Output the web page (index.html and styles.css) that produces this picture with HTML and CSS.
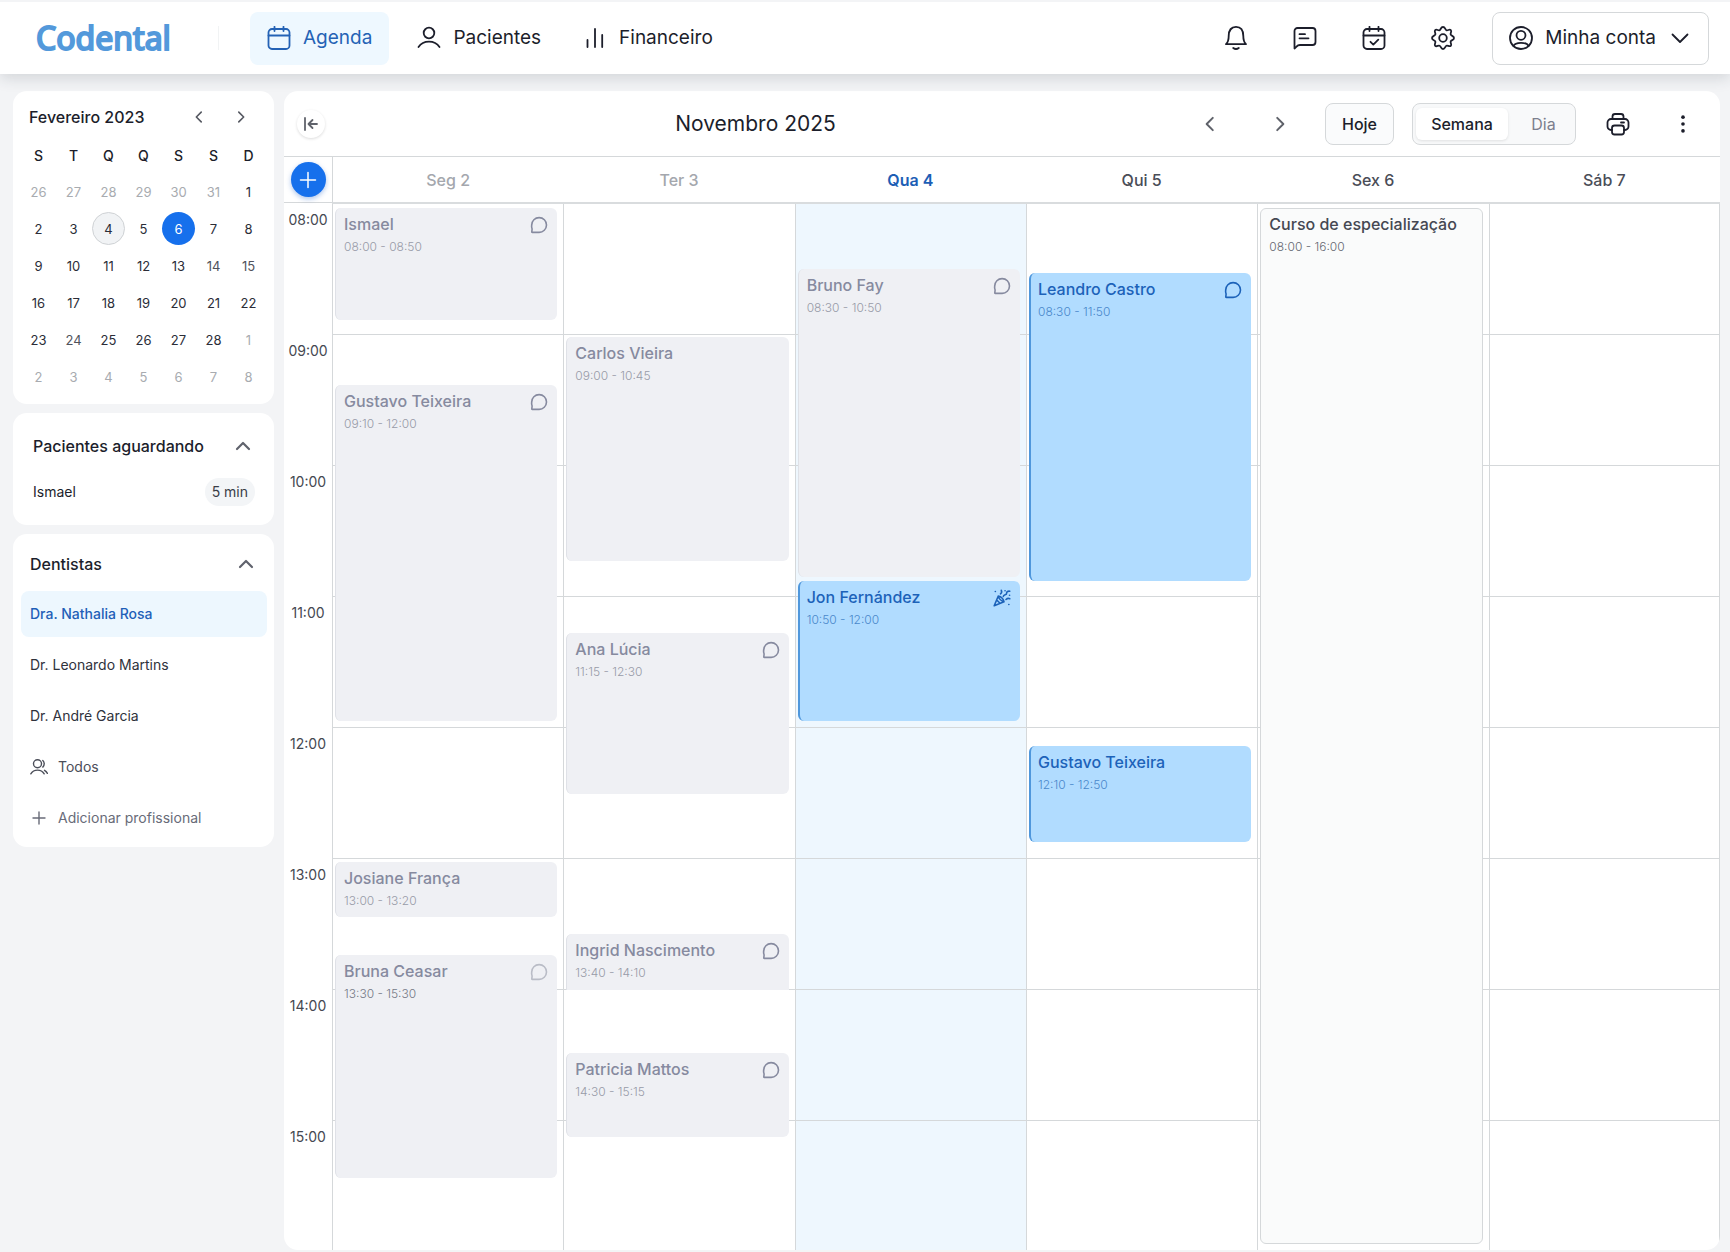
FILE: index.html
```html
<!DOCTYPE html>
<html lang="pt-BR">
<head>
<meta charset="utf-8">
<meta name="viewport" content="width=device-width, initial-scale=1">
<title>Codental – Agenda</title>
<link rel="stylesheet" href="styles.css">
</head>
<body>
<svg class="sprite" aria-hidden="true">
  <symbol id="chat" viewBox="0 0 18 18"><path d="M1.700 9A7.400 7.400 0 1 1 9 16.400H2.300q-.6 0-.5-.6l.3-2.800A7.400 7.400 0 0 1 1.700 9z"/></symbol>
  <symbol id="left" viewBox="0 0 18 18"><path d="M11.5 3.500 6 9l5.500 5.500"/></symbol>
  <symbol id="right" viewBox="0 0 18 18"><path d="M6.500 3.500 12 9l-5.500 5.500"/></symbol>
  <symbol id="up" viewBox="0 0 18 18"><path d="m3 12 6-6 6 6"/></symbol>
</svg>

<header class="topbar">
  <a class="logo" href="#">Codental</a>
  <nav class="nav">
    <a class="nav-link active" href="#" aria-current="page">
      <svg class="icon" viewBox="0 0 24 24"><rect x="1.500" y="3" width="21" height="20" rx="3.500"/><path d="M1.500 9.500h21M7.500.8V5M16.500.8V5"/></svg>
      Agenda</a>
    <a class="nav-link" href="#">
      <svg class="icon" viewBox="0 0 24 24"><circle cx="12" cy="7" r="5.300"/><path d="M1.500 21c2.500-3.700 6.300-5.300 10.500-5.300s8 1.600 10.500 5.300"/></svg>
      Pacientes</a>
    <a class="nav-link finance" href="#">
      <svg class="icon bars" viewBox="0 0 18 24"><path d="M1.500 14v7M9 3v18M16.200 9v12"/></svg>
      Financeiro</a>
  </nav>
  <div class="tools">
    <button class="tool" type="button" aria-label="Notificações">
      <svg class="icon" viewBox="0 0 24 24"><path d="M2 18.200c2.300-2.200 2.700-4 2.700-8.200C4.700 4.300 7.500.9 12 .9s7.300 3.400 7.300 9.100c0 4.200.4 6 2.700 8.200z"/><path d="M9.200 22q2.800 2 5.600 0"/></svg></button>
    <button class="tool" type="button" aria-label="Mensagens">
      <svg class="icon" viewBox="0 0 24 24"><path d="M1.500 22.500V5a3 3 0 0 1 3-3h15a3 3 0 0 1 3 3v11a3 3 0 0 1-3 3H7q-2.200 0-3.500 1.600z"/><path d="M6.500 8.200h5.500M6.500 12.300h9"/></svg></button>
    <button class="tool" type="button" aria-label="Confirmações">
      <svg class="icon" viewBox="0 0 24 24"><rect x="1.500" y="3" width="21" height="20" rx="3.500"/><path d="M1.500 9.500h21M7.500.8V5M16.500.8V5M8.500 15.800l2.800 2.800 5-5"/></svg></button>
    <button class="tool" type="button" aria-label="Configurações">
      <svg class="icon" viewBox="0 0 24 24"><circle cx="12" cy="12" r="3.800"/><path d="M12 1c2.300 0 1.900 2.500 3.400 3.200s3-1.500 4.400-.1-.8 3-.1 4.500S23 9.700 23 12s-2.600 1.900-3.300 3.400 1.500 3 .1 4.400-3-.8-4.400-.1S14.300 23 12 23s-1.900-2.600-3.400-3.300-3 1.500-4.400.1.800-3 .1-4.400S1 14.300 1 12s2.600-1.900 3.300-3.400-1.500-3-.1-4.500 3 .8 4.400.1S9.700 1 12 1z"/></svg></button>
    <button class="account" type="button">
      <svg class="icon" viewBox="0 0 24 24"><circle cx="12" cy="12" r="11"/><circle cx="12" cy="9.300" r="4.500"/><path d="M4.500 20c1-2.500 4-3.200 7.500-3.200s6.500.7 7.500 3.200"/></svg>
      Minha conta
      <svg class="icon" viewBox="0 0 24 24"><path d="m4.500 8.500 7.500 7.500 7.500-7.500"/></svg></button>
  </div>
</header>

<div class="page">
  <aside class="sidebar">
    <section class="card month">
      <div class="month-head">
        <h2>Fevereiro 2023</h2>
        <button type="button" aria-label="Mês anterior"><svg class="icon small"><use href="#left"/></svg></button>
        <button type="button" aria-label="Próximo mês"><svg class="icon small"><use href="#right"/></svg></button>
      </div>
      <table class="days">
        <thead><tr><th>S</th><th>T</th><th>Q</th><th>Q</th><th>S</th><th>S</th><th>D</th></tr></thead>
        <tbody>
          <tr><td class="out">26</td><td class="out">27</td><td class="out">28</td><td class="out">29</td><td class="out">30</td><td class="out">31</td><td>1</td></tr>
          <tr><td>2</td><td>3</td><td><span class="dot today">4</span></td><td>5</td><td><span class="dot picked">6</span></td><td>7</td><td>8</td></tr>
          <tr><td>9</td><td>10</td><td>11</td><td>12</td><td>13</td><td class="dim">14</td><td class="dim">15</td></tr>
          <tr><td>16</td><td>17</td><td>18</td><td>19</td><td>20</td><td>21</td><td>22</td></tr>
          <tr><td>23</td><td class="dim">24</td><td>25</td><td>26</td><td>27</td><td>28</td><td class="out">1</td></tr>
          <tr><td class="out">2</td><td class="out">3</td><td class="out">4</td><td class="out">5</td><td class="out">6</td><td class="out">7</td><td class="out">8</td></tr>
        </tbody>
      </table>
    </section>

    <section class="card waiting">
      <div class="card-head">
        <h2>Pacientes aguardando</h2>
        <button type="button" aria-label="Recolher pacientes aguardando"><svg class="icon small"><use href="#up"/></svg></button>
      </div>
      <div class="waiting-row"><span>Ismael</span><span class="pill">5 min</span></div>
    </section>

    <section class="card dentists">
      <div class="card-head">
        <h2>Dentistas</h2>
        <button type="button" aria-label="Recolher dentistas"><svg class="icon small"><use href="#up"/></svg></button>
      </div>
      <div class="dentist-list">
        <button class="dentist selected" type="button">Dra. Nathalia Rosa</button>
        <button class="dentist" type="button">Dr. Leonardo Martins</button>
        <button class="dentist" type="button">Dr. André Garcia</button>
        <button class="dentist muted" type="button"><svg class="icon small" viewBox="0 0 18 18"><circle cx="7.500" cy="5.800" r="4"/><path d="M.8 15.800c1.600-2.600 4-3.700 6.700-3.700s5.100 1.100 6.700 3.700M12.800 2.500q1.400 1.200 1.400 3.300T12.800 9.100M14.500 12.300q1.800 1 2.900 3"/></svg>Todos</button>
        <button class="dentist add" type="button"><svg class="icon small" viewBox="0 0 18 18"><path d="M9 3v12M3 9h12"/></svg>Adicionar profissional</button>
      </div>
    </section>
  </aside>

  <main class="agenda">
    <div class="toolbar">
      <button class="collapse" type="button" aria-label="Recolher menu"><svg class="icon" viewBox="0 0 16 16"><path d="M2 2v12M14 8H6M9.500 4 5.500 8l4 4"/></svg></button>
      <h1>Novembro 2025</h1>
      <button class="arrow" type="button" aria-label="Semana anterior"><svg class="icon"><use href="#left"/></svg></button>
      <button class="arrow" type="button" aria-label="Próxima semana"><svg class="icon"><use href="#right"/></svg></button>
      <button class="today-btn" type="button">Hoje</button>
      <div class="switch" role="radiogroup" aria-label="Visualização">
        <input type="radio" name="view" id="view-week" checked><label for="view-week">Semana</label>
        <input type="radio" name="view" id="view-day"><label for="view-day">Dia</label>
      </div>
      <button class="tool-sm" type="button" aria-label="Imprimir"><svg class="icon" viewBox="0 0 24 24"><path d="M6.500 7V4.500a2.500 2.500 0 0 1 2.500-2.500h6a2.500 2.500 0 0 1 2.500 2.500V7M6 18H5a3.500 3.500 0 0 1-3.500-3.500v-4A3.500 3.500 0 0 1 5 7h14a3.500 3.500 0 0 1 3.500 3.500v4A3.500 3.500 0 0 1 19 18h-1M15 10.500h3"/><rect x="6" y="13.500" width="12" height="9" rx="2.500"/></svg></button>
      <button class="tool-sm" type="button" aria-label="Mais opções"><svg class="dots" viewBox="0 0 24 24"><circle cx="12" cy="4.500" r="2"/><circle cx="12" cy="12" r="2"/><circle cx="12" cy="19.500" r="2"/></svg></button>
    </div>

    <div class="week week-head">
      <div class="corner"><button class="new" type="button" aria-label="Novo agendamento"><svg class="icon" viewBox="0 0 18 18"><path d="M9 1.500v15M1.500 9h15"/></svg></button></div>
      <div class="day-name past">Seg 2</div>
      <div class="day-name past">Ter 3</div>
      <div class="day-name now">Qua 4</div>
      <div class="day-name">Qui 5</div>
      <div class="day-name">Sex 6</div>
      <div class="day-name">Sáb 7</div>
    </div>

    <div class="week week-body">
      <div class="hours"><span>08:00</span><span>09:00</span><span>10:00</span><span>11:00</span><span>12:00</span><span>13:00</span><span>14:00</span><span>15:00</span></div>

      <div class="day">
        <article class="event" style="top:4px;height:112px"><h3>Ismael</h3><time>08:00 - 08:50</time><svg class="badge"><use href="#chat"/></svg></article>
        <article class="event" style="top:181px;height:336px"><h3>Gustavo Teixeira</h3><time>09:10 - 12:00</time><svg class="badge"><use href="#chat"/></svg></article>
        <article class="event" style="top:658px;height:55px"><h3>Josiane França</h3><time>13:00 - 13:20</time></article>
        <article class="event unread" style="top:751px;height:223px"><h3>Bruna Ceasar</h3><time>13:30 - 15:30</time><svg class="badge"><use href="#chat"/></svg></article>
      </div>

      <div class="day">
        <article class="event" style="top:133px;height:224px"><h3>Carlos Vieira</h3><time>09:00 - 10:45</time></article>
        <article class="event" style="top:429px;height:161px"><h3>Ana Lúcia</h3><time>11:15 - 12:30</time><svg class="badge"><use href="#chat"/></svg></article>
        <article class="event cut" style="top:730px;height:56px"><h3>Ingrid Nascimento</h3><time>13:40 - 14:10</time><svg class="badge"><use href="#chat"/></svg></article>
        <article class="event" style="top:849px;height:84px"><h3>Patricia Mattos</h3><time>14:30 - 15:15</time><svg class="badge"><use href="#chat"/></svg></article>
      </div>

      <div class="day current">
        <article class="event" style="top:65px;height:308px"><h3>Bruno Fay</h3><time>08:30 - 10:50</time><svg class="badge"><use href="#chat"/></svg></article>
        <article class="event next" style="top:377px;height:140px"><h3>Jon Fernández</h3><time>10:50 - 12:00</time><svg class="badge" viewBox="0 0 18 18"><path d="M5.300 7 1.200 16.800 11 12.700M5.300 7q.6 4 5.700 5.700M5.300 7q4.600 1 5.700 5.700M3.700 11l3.300 3.300M7.500 4.800q1.800-1.300.8-3.500M10.300 7.500c.3-2.400 3.500-1 3.300-3.300-.1-1.700 1.500-2.200 3.200-2M13 10.500q1.800-1.600 3.800-.8M2.300 2.500h.1M12 1.800h.1M16.500 6.200h.1M15.800 15.500h.1"/></svg></article>
      </div>

      <div class="day">
        <article class="event next" style="top:69px;height:308px"><h3>Leandro Castro</h3><time>08:30 - 11:50</time><svg class="badge"><use href="#chat"/></svg></article>
        <article class="event next" style="top:542px;height:96px"><h3>Gustavo Teixeira</h3><time>12:10 - 12:50</time></article>
      </div>

      <div class="day">
        <article class="event blocked" style="top:4px;height:1036px"><h3>Curso de especialização</h3><time>08:00 - 16:00</time></article>
      </div>

      <div class="day"></div>
    </div>
  </main>
</div>
</body>
</html>
```

FILE: styles.css
```css
:root {
  --ink: #1c1e2b;
  --line: #d5d8da;
  --blue: #1670ec;
  --hour: 131px;
}

* { box-sizing: border-box; }

body {
  margin: 0;
  background: #f3f4f6;
  color: var(--ink);
  font: 400 14px/20px Inter, "Liberation Sans", sans-serif;
}

h1, h2, h3 { margin: 0; }
a { color: inherit; text-decoration: none; }

button {
  display: flex;
  align-items: center;
  justify-content: center;
  padding: 0;
  border: 0;
  background: none;
  color: inherit;
  font: inherit;
  cursor: pointer;
}

.sprite { position: absolute; width: 0; height: 0; }

.icon, .badge {
  flex: none;
  width: 24px;
  height: 24px;
  fill: none;
  stroke: currentColor;
  stroke-width: 1.8;
  stroke-linecap: round;
  stroke-linejoin: round;
}
.icon.small { width: 18px; height: 18px; }

/* Top bar */
.topbar {
  position: relative;
  display: flex;
  align-items: center;
  height: 74px;
  padding: 0 21px 0 36px;
  border-top: 2px solid #f3f4f6;
  background: #fff;
  box-shadow: 0 4px 14px rgba(40, 50, 60, .16);
}
.logo {
  width: 183px;
  border-right: 1px solid #f1f3f4;
  color: #5399db;
  font: 400 32px/24px "Noto Sans", sans-serif;
  -webkit-text-stroke: 2px #5399db;
  stroke-linejoin: round;
}
.nav {
  display: flex;
  gap: 11px;
  margin-left: 31px;
}
.nav-link {
  display: flex;
  align-items: center;
  gap: 12px;
  height: 53px;
  padding: 0 17px;
  border-radius: 8px;
  font-size: 19px;
}
.nav-link.active { background: #eef8ff; color: #2462b5; }
.icon.bars { width: 18px; }
.nav-link.finance { gap: 15px; }

.tools {
  display: flex;
  align-items: center;
  gap: 29px;
  margin-left: auto;
}
.tool { width: 40px; height: 40px; }
.account {
  gap: 12px;
  height: 53px;
  padding: 0 16px;
  border: 1px solid #d5d8da;
  border-radius: 8px;
  font-size: 19px;
}

/* Page columns */
.page {
  display: flex;
  align-items: flex-start;
  gap: 10px;
  padding: 17px 10px 2px 13px;
}
.sidebar {
  flex: none;
  display: flex;
  flex-direction: column;
  gap: 9px;
  width: 261px;
}
.card { border-radius: 14px; background: #fff; }
.card h2 {
  flex: 1;
  font-size: 16px;
  font-weight: 500;
}

/* Small month calendar */
.month { padding: 8px 8px 9px; }
.month-head {
  display: flex;
  align-items: center;
  gap: 6px;
  height: 36px;
  padding: 0 7px 0 8px;
}
.month-head button { width: 36px; height: 36px; color: #555861; }
.month-head .icon.small { width: 16px; height: 16px; }
.days {
  width: 100%;
  border-collapse: collapse;
  table-layout: fixed;
  text-align: center;
}
.days th { height: 38px; padding: 4px 0 0; font-weight: 500; }
.days td { height: 37px; padding: 0; font-size: 13px; color: #2b2d38; }
.days td.out { color: #a8abb0; }
.days td.dim { color: #50535c; }
.dot {
  display: inline-grid;
  place-items: center;
  width: 33px;
  height: 33px;
  border-radius: 50%;
}
.dot.today { border: 1px solid #cfd2d5; background: #f1f3f5; }
.dot.picked { background: var(--blue); color: #fff; }

/* Waiting patients and dentists */
.card-head { display: flex; align-items: center; }
.card-head button { width: 24px; height: 24px; color: #60636d; }
.card-head .icon { stroke-width: 2.2; }
.waiting { padding: 21px 19px 19px 20px; }
.waiting-row {
  display: flex;
  align-items: center;
  justify-content: space-between;
  margin-top: 20px;
}
.pill {
  padding: 4px 7px;
  border-radius: 14px;
  background: #f3f5f7;
  color: #3a3d47;
}
.dentists { padding: 18px 7px 6px 8px; }
.dentists .card-head { padding: 0 9px; }
.dentist-list { margin-top: 15px; display: grid; gap: 5px; }
.dentist {
  justify-content: flex-start;
  gap: 10px;
  height: 46px;
  padding: 0 9px;
  border-radius: 8px;
  color: #2f323c;
}
.dentist.selected { background: #edf7fe; color: #1f5fb8; font-weight: 500; }
.dentist.muted { color: #4b4e59; }
.dentist.add { color: #686b78; }
.dentist .icon { stroke-width: 1.4; }

/* Agenda */
.agenda {
  flex: 1;
  min-width: 0;
  overflow: hidden;
  border-radius: 14px;
  background: #fff;
}
.toolbar {
  display: flex;
  align-items: center;
  height: 66px;
  padding: 0 17px 0 13px;
  border-bottom: 1px solid var(--line);
}
.toolbar h1 {
  flex: 1;
  padding-right: 4px;
  font-size: 21px;
  font-weight: 400;
  text-align: center;
}
.collapse {
  width: 28px;
  height: 28px;
  border-radius: 50%;
  color: #60636b;
  box-shadow: 0 1px 3px rgba(0, 0, 0, .14);
}
.collapse .icon { width: 16px; height: 16px; }
.arrow { width: 40px; height: 40px; margin-right: 30px; color: #60636b; }
.arrow + .arrow { margin-right: 25px; }
.arrow .icon { width: 20px; height: 20px; }
.today-btn {
  width: 69px;
  height: 42px;
  margin-right: 18px;
  border: 1px solid #d5d8da;
  border-radius: 8px;
  background: #fafbfc;
  font-size: 16px;
  font-weight: 500;
}
.switch {
  display: flex;
  width: 164px;
  height: 42px;
  padding: 4px 3px;
  border: 1px solid #d5d8da;
  border-radius: 8px;
  background: #f8f9fa;
}
.switch input { position: absolute; opacity: 0; pointer-events: none; }
.switch label {
  flex: 1;
  display: grid;
  place-items: center;
  padding-left: 7px;
  border-radius: 6px;
  color: #7c7f8d;
  font-size: 16px;
  cursor: pointer;
}
.switch label:first-of-type { flex: 0 0 92px; padding: 0; }
.switch input:checked + label {
  background: #fff;
  color: var(--ink);
  font-weight: 500;
  box-shadow: 0 1px 3px rgba(0, 0, 0, .1);
}
.tool-sm { width: 40px; height: 40px; margin-left: 22px; }
.tool-sm + .tool-sm { margin-left: 25px; }
.dots { width: 22px; height: 22px; fill: currentColor; }

.week {
  display: grid;
  grid-template-columns: 48px repeat(6, minmax(0, 1fr));
}
.corner {
  display: grid;
  place-items: center;
  height: 46px;
  border-bottom: 1px solid var(--line);
}
.new {
  width: 35px;
  height: 35px;
  border-radius: 50%;
  background: var(--blue);
  color: #fff;
  box-shadow: 0 2px 5px rgba(20, 90, 200, .35);
}
.new .icon { width: 18px; height: 18px; stroke-width: 1.5; }
.day-name {
  display: grid;
  place-items: center;
  height: 47px;
  border-bottom: 2px solid #d9dcde;
  color: #4a4d57;
  font-size: 16px;
  font-weight: 500;
}
.corner + .day-name { border-left: 1px solid var(--line); }
.day-name.past { color: #a4a7ad; }
.day-name.now { color: #1c5eb5; font-weight: 600; }

.hours { display: grid; grid-auto-rows: var(--hour); }
.hours span { padding-top: 6px; color: #454851; text-align: center; }

.day {
  position: relative;
  border-left: 1px solid var(--line);
  background: repeating-linear-gradient(transparent 0 130px, var(--line) 130px 131px);
}
.day:last-child { border-right: 1px solid var(--line); }
.day.current { background-color: #eef7fe; }
.week-body { height: 1046px; overflow: hidden; }

.event {
  position: absolute;
  left: 2px;
  right: 6px;
  padding: 5px 8px;
  border-left: 1px solid #dfe1e7;
  border-radius: 6px;
  background: #eff0f4;
  color: #868a9f;
}
.event h3 { font-size: 16px; font-weight: 500; line-height: 22px; }
.event time {
  display: block;
  color: #989ba8;
  font-size: 12px;
  font-weight: 300;
  line-height: 24px;
}
.badge {
  position: absolute;
  top: 8px;
  right: 9px;
  width: 18px;
  height: 18px;
  stroke-width: 1.6;
}
.event.unread .badge { color: #b9bcc6; }
.event.unread time { color: #757986; }
.event.cut { border-radius: 6px 6px 0 0; }
.event.next {
  padding-left: 7px;
  border-left: 2px solid #4f97dc;
  background: #b1dcff;
  color: #1c62b9;
}
.event.next time { color: #4a88cb; }
.event.blocked {
  padding-top: 4px;
  border: 1px solid #d5d8da;
  background: #fafbfb;
  color: #454852;
}
.event.blocked time { color: #656872; }
```
